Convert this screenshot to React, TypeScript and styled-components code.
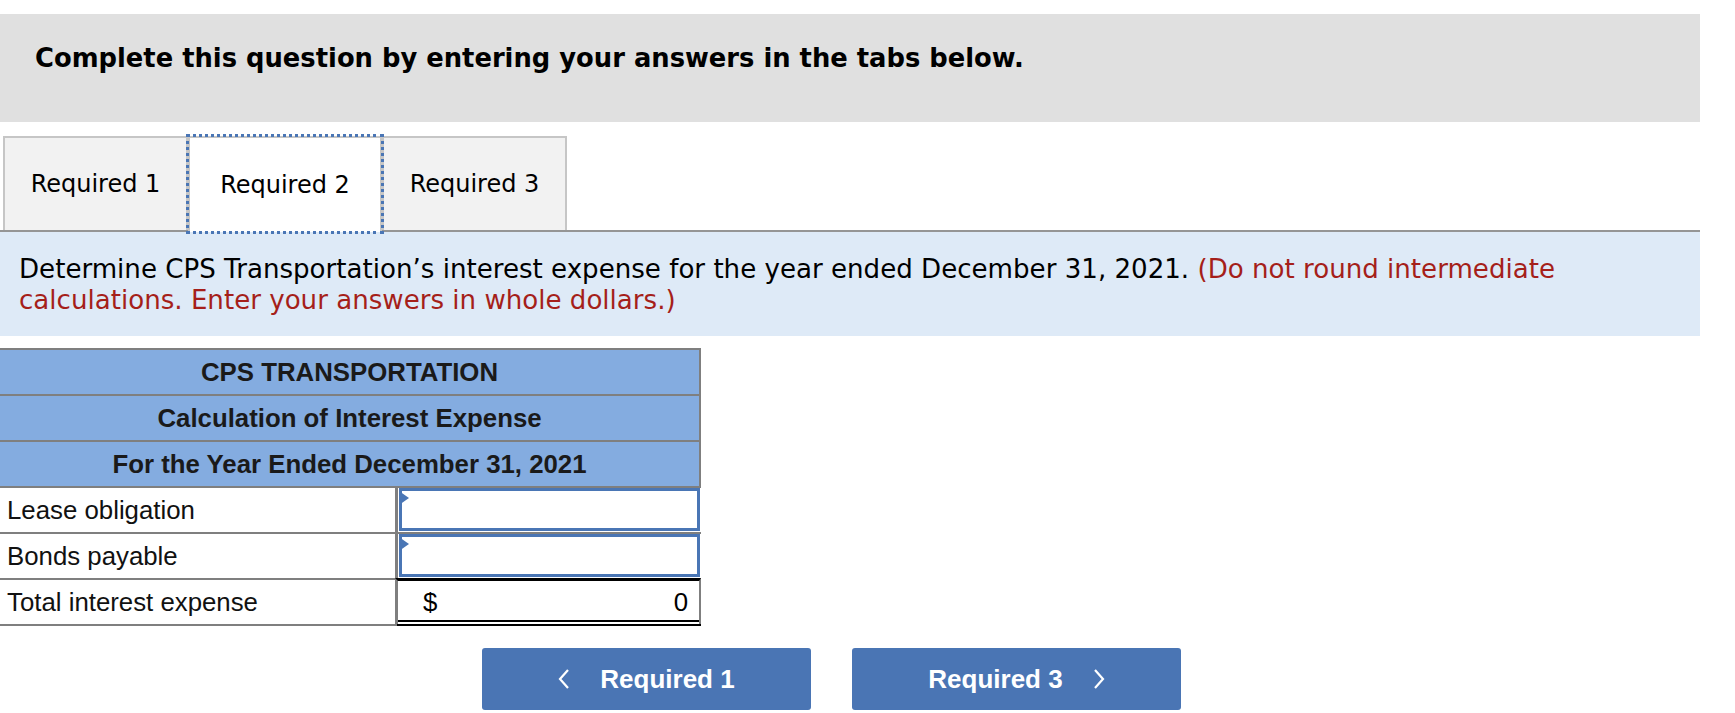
import React from "react";
import styled, { createGlobalStyle } from "styled-components";

const GlobalStyle = createGlobalStyle`
  body {
    margin: 0;
    background: #ffffff;
    font-family: "DejaVu Sans", Verdana, sans-serif;
    color: #000;
  }
`;

const Page = styled.div`
  width: 1700px;
  padding-top: 14px;
`;

const Banner = styled.div`
  height: 108px;
  background: #e0e0e0;
  padding: 29px 0 0 35px;
  box-sizing: border-box;
  font-weight: bold;
  font-size: 25.8px;
`;

const TabRow = styled.div`
  display: flex;
  margin-top: 14px;
  padding-left: 3px;
  border-bottom: 2px solid #959595;
  height: 94px;
`;

const Tab = styled.div<{ $active?: boolean; $width: number }>`
  box-sizing: border-box;
  width: ${(p) => p.$width}px;
  display: flex;
  align-items: center;
  justify-content: center;
  font-size: 24px;
  background: ${(p) => (p.$active ? "#ffffff" : "#f2f2f2")};
  border: 2px solid #c6c6c6;
  border-bottom: none;
  outline: ${(p) => (p.$active ? "3px dotted #4a76b5" : "none")};
  outline-offset: -1px;
  position: relative;
  z-index: ${(p) => (p.$active ? 1 : 0)};
  margin-bottom: ${(p) => (p.$active ? "-2px" : "0")};
  height: ${(p) => (p.$active ? "96px" : "94px")};
`;

const Prompt = styled.div`
  background: #deeaf7;
  height: 104px;
  box-sizing: border-box;
  padding: 22px 110px 0 19px;
  font-size: 26.1px;
  line-height: 31px;
`;

const Note = styled.span`
  color: #a51f1a;
`;

const Sheet = styled.div`
  margin-top: 12px;
  width: 701px;
  font-family: "Liberation Sans", Arial, sans-serif;
  font-size: 25.8px;
  border-top: 2px solid #7f7f7f;
`;

const HeadRow = styled.div`
  height: 44px;
  background: #84ace0;
  border-right: 2px solid #7f7f7f;
  border-bottom: 2px solid #7f7f7f;
  display: flex;
  align-items: center;
  justify-content: center;
  font-weight: bold;
  color: #1a1a1a;
`;

const DataRow = styled.div`
  display: grid;
  grid-template-columns: 395px 306px;
  height: 46px;
  box-sizing: border-box;
  border-bottom: 2px solid #7f7f7f;
`;

const Label = styled.div`
  display: flex;
  align-items: center;
  padding-left: 7px;
  color: #111;
`;

const ValueCell = styled.div<{ $total?: boolean }>`
  border-left: 3px solid #7f7f7f;
  border-right: ${(p) => (p.$total ? "2px solid #7f7f7f" : "none")};
  position: relative;
  display: flex;
  align-items: center;
  justify-content: space-between;
  padding: ${(p) => (p.$total ? "0 11px 0 25px" : "0")};
  border-top: ${(p) => (p.$total ? "3px solid #000" : "none")};
  margin-top: ${(p) => (p.$total ? "-2px" : "0")};
`;

const AnswerBox = styled.div`
  position: absolute;
  inset: 0 1px 1px 1px;
  border: 3px solid #4a76b5;
  background: #fff;
`;

const Marker = styled.div`
  position: absolute;
  left: 1px;
  top: 3px;
  width: 0;
  height: 0;
  border-top: 7px solid transparent;
  border-bottom: 7px solid transparent;
  border-left: 10px solid #4a76b5;
`;

const DoubleRule = styled.div`
  margin-left: 397px;
  width: 304px;
  height: 6px;
  box-sizing: border-box;
  border-top: 2px solid #000;
  border-bottom: 2px solid #000;
  margin-top: -6px;
`;

const NavRow = styled.div`
  display: flex;
  gap: 41px;
  padding-left: 482px;
  margin-top: 22px;
`;

const NavButton = styled.button`
  width: 329px;
  height: 62px;
  border: none;
  border-radius: 3px;
  background: #4a75b4;
  color: #fff;
  font-family: "Liberation Sans", Arial, sans-serif;
  font-weight: bold;
  font-size: 26px;
  display: flex;
  align-items: center;
  justify-content: center;
  gap: 30px;
  cursor: pointer;
`;

const Chevron = ({ dir }: { dir: "left" | "right" }) => (
  <svg width="12" height="22" viewBox="0 0 12 22">
    <polyline
      points={dir === "left" ? "10,2 2,11 10,20" : "2,2 10,11 2,20"}
      fill="none"
      stroke="#fff"
      strokeWidth="2.2"
    />
  </svg>
);

export default function App() {
  return (
    <Page>
      <GlobalStyle />
      <Banner>Complete this question by entering your answers in the tabs below.</Banner>
      <TabRow>
        <Tab $width={185}>Required 1</Tab>
        <Tab $width={194} $active>
          Required 2
        </Tab>
        <Tab $width={185}>Required 3</Tab>
      </TabRow>
      <Prompt>
        Determine CPS Transportation’s interest expense for the year ended December 31, 2021.{" "}
        <Note>(Do not round intermediate calculations. Enter your answers in whole dollars.)</Note>
      </Prompt>
      <Sheet>
        <HeadRow>CPS TRANSPORTATION</HeadRow>
        <HeadRow>Calculation of Interest Expense</HeadRow>
        <HeadRow>For the Year Ended December 31, 2021</HeadRow>
        <DataRow>
          <Label>Lease obligation</Label>
          <ValueCell>
            <AnswerBox />
            <Marker />
          </ValueCell>
        </DataRow>
        <DataRow>
          <Label>Bonds payable</Label>
          <ValueCell>
            <AnswerBox />
            <Marker />
          </ValueCell>
        </DataRow>
        <DataRow>
          <Label>Total interest expense</Label>
          <ValueCell $total>
            <span>$</span>
            <span>0</span>
          </ValueCell>
        </DataRow>
        <DoubleRule />
      </Sheet>
      <NavRow>
        <NavButton>
          <Chevron dir="left" />
          Required 1
        </NavButton>
        <NavButton>
          Required 3
          <Chevron dir="right" />
        </NavButton>
      </NavRow>
    </Page>
  );
}
